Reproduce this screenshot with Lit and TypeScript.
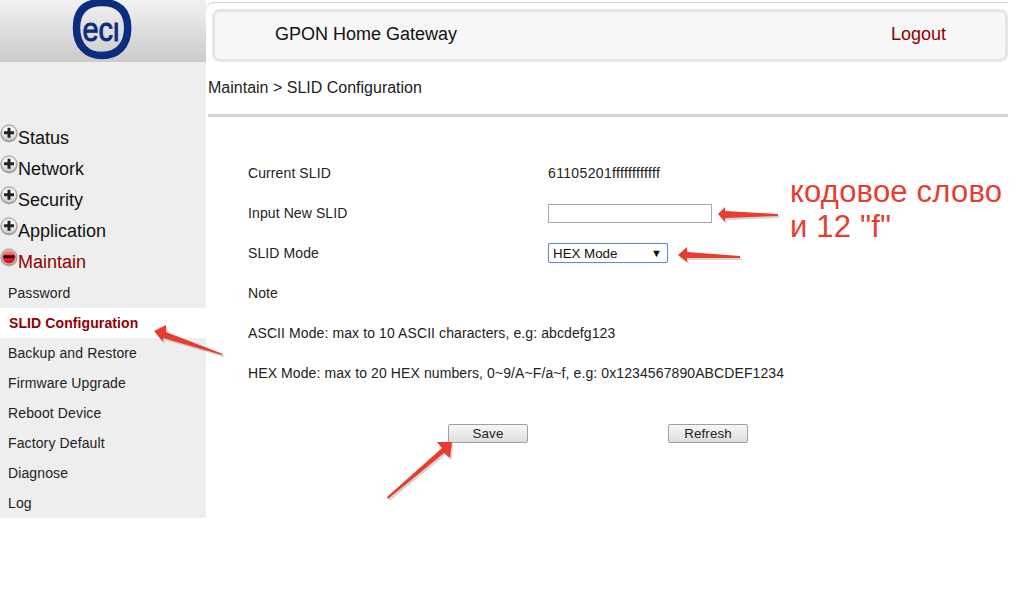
import { LitElement, html, css, svg } from "lit";
import { customElement } from "lit/decorators.js";

const mainMenu = ["Status", "Network", "Security", "Application"];
const subMenu = ["Password", "SLID Configuration", "Backup and Restore", "Firmware Upgrade", "Reboot Device", "Factory Default", "Diagnose", "Log"];

const bullet = (open: boolean) => html`<svg class="bullet" width="18" height="19" viewBox="0 0 18 19">
  <defs>
    <linearGradient id="g${open ? 1 : 0}" x1="0" y1="0" x2="0" y2="1">
      <stop offset="0" stop-color="${open ? "#f3a0a0" : "#ffffff"}"/>
      <stop offset=".5" stop-color="${open ? "#e8323a" : "#f2f2f2"}"/>
      <stop offset="1" stop-color="${open ? "#c4121e" : "#cfcfcf"}"/>
    </linearGradient>
  </defs>
  <circle cx="9" cy="10" r="8.500" fill="#a9a9a9"/>
  <circle cx="9" cy="8.800" r="8" fill="${open ? "#d8c4c4" : "#d4d4d4"}" stroke="#8c8c8c" stroke-width=".7"/>
  <circle cx="9" cy="8.800" r="6.600" fill="url(#g${open ? 1 : 0})"/>
  ${open
    ? svg`<rect x="3.500" y="7.300" width="11" height="3" rx="1" fill="#3a0406"/>`
    : svg`<path d="M7.500 3.800h3v3.500H14v3h-3.500v3.500h-3v-3.500H4v-3h3.500z" fill="#222"/>`}
</svg>`;

const arrow = (pts: string) => svg`
  <polygon points="${pts}" fill="#b8b8b8" opacity=".6" transform="translate(1.500 2)"/>
  <polygon points="${pts}" fill="#e63d30"/>`;

@customElement("app-root")
export class AppRoot extends LitElement {
  static styles = css`
    :host {
      display: block;
      position: relative;
      width: 1027px;
      height: 597px;
      overflow: hidden;
      background: #fff;
      font-family: "Liberation Sans", Arial, sans-serif;
      color: #222;
    }
    .page { display: grid; grid-template-columns: 206px 802px; }
    .side { display: flex; flex-direction: column; }
    .logo {
      height: 62px;
      background: linear-gradient(#f1f1f1, #cbcbcb);
      display: flex;
      align-items: flex-start;
      box-sizing: border-box;
      padding-left: 71px;
    }
    .menu {
      background: #eee;
      padding-top: 61px;
      height: 456px;
      box-sizing: border-box;
    }
    .main-item {
      height: 31px;
      display: flex;
      align-items: center;
      font-size: 18px;
      color: #111;
      position: relative;
      padding-left: 18px;
    }
    .main-item.open { color: #8f0000; }
    .bullet { position: absolute; left: 0; top: 1px; }
    .sub {
      height: 30px;
      display: flex;
      align-items: center;
      padding-left: 8px;
      font-size: 14px;
      letter-spacing: .12px;
      color: #222;
    }
    .sub.on {
      background: #fff;
      color: #8f0000;
      font-weight: bold;
      padding-left: 9px;
      letter-spacing: .1px;
    }
    .content { padding-left: 2px; }
    .top {
      height: 60px;
      margin-top: 2px;
      box-sizing: border-box;
      border-top: 1px solid #d0d0d0;
      border-top-left-radius: 8px;
      margin-left: -2px;
      padding: 6px 0 0 6px;
    }
    .bar {
      height: 53px;
      box-sizing: border-box;
      border: 3px solid #e6e6e6;
      border-radius: 8px;
      background: #f7f7f7;
      display: flex;
      align-items: center;
      justify-content: space-between;
      padding: 0 59px 3px 60px;
      font-size: 18px;
      color: #111;
    }
    .bar .logout { color: #8f0000; }
    .crumb {
      height: 55px;
      display: flex;
      align-items: center;
      font-size: 16px;
      color: #222;
      border-bottom: 3px solid #d2d2d2;
      box-sizing: border-box;
    }
    .rows { padding: 36px 0 0 40px; font-size: 14px; letter-spacing: .1px; color: #222; }
    .row { height: 40px; display: grid; grid-template-columns: 300px 1fr; align-items: center; }
    .row.text { display: flex; }
    .value { letter-spacing: .35px; }
    input {
      width: 164px;
      height: 19px;
      box-sizing: border-box;
      border: 1px solid #a9a9a9;
      padding: 0;
      margin: 0;
      display: block;
      background: #fff;
    }
    .select {
      width: 120px;
      height: 20px;
      box-sizing: border-box;
      border: 1px solid #5f8ad6;
      border-radius: 2px;
      box-shadow: 0 0 1px #7fa4e6;
      display: flex;
      align-items: center;
      justify-content: space-between;
      padding: 0 5px 0 4px;
      font-size: 13.33px;
      letter-spacing: 0;
      color: #111;
      background: #fff;
    }
    .caret { font-size: 11px; color: #111; }
    .actions { display: flex; gap: 140px; padding: 31px 0 0 200px; }
    button {
      width: 80px;
      height: 19px;
      box-sizing: border-box;
      border: 1px solid #a0a0a0;
      border-radius: 2px;
      background: linear-gradient(#f6f6f6, #dedede);
      font: 13.33px "Liberation Sans", Arial, sans-serif;
      letter-spacing: .1px;
      color: #222;
      padding: 0;
      line-height: 15px;
    }
    .note {
      position: absolute;
      left: 790px;
      top: 174px;
      font-size: 31px;
      line-height: 35px;
      letter-spacing: .2px;
      color: #e63d30;
      white-space: pre;
    }
    .arrows { position: absolute; left: 0; top: 0; pointer-events: none; }
  `;

  render() {
    return html`
      <div class="page">
        <aside class="side">
          <div class="logo">
            <svg width="62" height="60" viewBox="0 0 62 60">
              <defs><clipPath id="noDot"><rect x="0" y="22" width="62" height="30"/></clipPath></defs>
              <path d="M31 2.500C47 2.500 56.700 10 56.700 28C56.700 46 46 55.500 31 55.500C16 55.500 5.500 46 5.500 28C5.500 10 15 2.500 31 2.500Z" fill="none" stroke="#0b2d7e" stroke-width="7.500"/>
              <text x="11.500" y="41" clip-path="url(#noDot)" textLength="37" lengthAdjust="spacingAndGlyphs" font-family="'Liberation Sans', Arial, sans-serif" font-size="34" fill="#0b2d7e" stroke="#0b2d7e" stroke-width=".9">eci</text>
            </svg>
          </div>
          <nav class="menu">
            ${mainMenu.map((m) => html`<div class="main-item">${bullet(false)}${m}</div>`)}
            <div class="main-item open">${bullet(true)}Maintain</div>
            ${subMenu.map((s, i) => html`<div class="sub ${i === 1 ? "on" : ""}">${s}</div>`)}
          </nav>
        </aside>
        <main class="content">
          <div class="top">
            <div class="bar">
              <span class="title">GPON Home Gateway</span>
              <span class="logout">Logout</span>
            </div>
          </div>
          <div class="crumb">Maintain &gt; SLID Configuration</div>
          <div class="rows">
            <div class="row"><span>Current SLID</span><span class="value">61105201ffffffffffff</span></div>
            <div class="row"><span>Input New SLID</span><input type="text" /></div>
            <div class="row"><span>SLID Mode</span>
              <div class="select"><span>HEX Mode</span><span class="caret">▼</span></div>
            </div>
            <div class="row text">Note</div>
            <div class="row text">ASCII Mode: max to 10 ASCII characters, e.g: abcdefg123</div>
            <div class="row text">HEX Mode: max to 20 HEX numbers, 0~9/A~F/a~f, e.g: 0x1234567890ABCDEF1234</div>
            <div class="actions"><button>Save</button><button>Refresh</button></div>
          </div>
        </main>
      </div>
      <div class="note">кодовое слово
и 12 "f"</div>
      <svg class="arrows" width="1027" height="597" viewBox="0 0 1027 597">
        ${arrow("718,214 725,207 725,211 778,214 778,216 725,218 725,222")}
        ${arrow("678,255 687,247 687,252 740,256 740,258 687,258 687,262")}
        ${arrow("154,331 166,325 166,332 223,354 222,355 163,338 163,342")}
        ${arrow("452,442 450,458 444,453 388,499 387,497 442,448 437,442")}
      </svg>
    `;
  }
}
